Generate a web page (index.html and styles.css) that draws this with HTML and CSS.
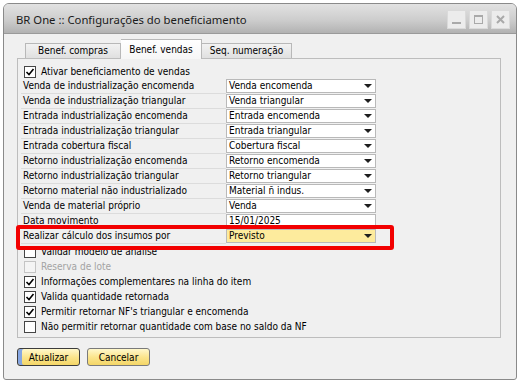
FILE: index.html
```html
<!DOCTYPE html>
<html lang="pt-BR">
<head>
    <meta charset="UTF-8">
    <title>BR One :: Configurações do beneficiamento</title>
    <link rel="stylesheet" href="styles.css">
</head>
<body>
    <div class="window">
        <div class="titlebar">
            <span class="title">BR One :: Configurações do beneficiamento</span>
            <div class="controls">
                <span class="ctl"><svg width="11" height="11" viewBox="0 0 11 11"><rect x="1" y="8" width="9" height="2" fill="#a9a9a9"/></svg></span>
                <span class="ctl"><svg width="11" height="11" viewBox="0 0 11 11"><rect x="1.5" y="1.5" width="8" height="8" fill="none" stroke="#a9a9a9" stroke-width="1"/><rect x="1" y="1" width="9" height="2" fill="#a9a9a9"/></svg></span>
                <span class="ctl"><svg width="11" height="11" viewBox="0 0 11 11"><path d="M2 2 L9 9 M9 2 L2 9" stroke="#a9a9a9" stroke-width="2"/></svg></span>
            </div>
        </div>

        <div class="content">
            <div class="tabs">
                <div class="tab tab-1">Benef. compras</div>
                <div class="tab tab-2 active">Benef. vendas</div>
                <div class="tab tab-3">Seq. numeração</div>
            </div>

            <div class="panel">
                <div class="check-row">
                    <span class="box"><svg width="10" height="10" viewBox="0 0 10 10"><path d="M1.5 5 L4 7.5 L8.5 2" fill="none" stroke="#000" stroke-width="1.6"/></svg></span>
                    Ativar beneficiamento de vendas
                </div>

                <div class="field-row"><span class="label">Venda de industrialização encomenda</span><span class="combo">Venda encomenda</span></div>
                <div class="field-row"><span class="label">Venda de industrialização triangular</span><span class="combo">Venda triangular</span></div>
                <div class="field-row"><span class="label">Entrada industrialização encomenda</span><span class="combo">Entrada encomenda</span></div>
                <div class="field-row"><span class="label">Entrada industrialização triangular</span><span class="combo">Entrada triangular</span></div>
                <div class="field-row"><span class="label">Entrada cobertura fiscal</span><span class="combo">Cobertura fiscal</span></div>
                <div class="field-row"><span class="label">Retorno industrialização encomenda</span><span class="combo">Retorno encomenda</span></div>
                <div class="field-row"><span class="label">Retorno industrialização triangular</span><span class="combo">Retorno triangular</span></div>
                <div class="field-row"><span class="label">Retorno material não industrializado</span><span class="combo">Material ñ indus.</span></div>
                <div class="field-row"><span class="label">Venda de material próprio</span><span class="combo">Venda</span></div>
                <div class="field-row"><span class="label">Data movimento</span><span class="edit">15/01/2025</span></div>
                <div class="field-row"><span class="label">Realizar cálculo dos insumos por</span><span class="combo selected">Previsto</span></div>

                <div class="check-row">
                    <span class="box"></span>
                    Validar modelo de análise
                </div>
                <div class="check-row disabled">
                    <span class="box"></span>
                    Reserva de lote
                </div>
                <div class="check-row">
                    <span class="box"><svg width="10" height="10" viewBox="0 0 10 10"><path d="M1.5 5 L4 7.5 L8.5 2" fill="none" stroke="#000" stroke-width="1.6"/></svg></span>
                    Informações complementares na linha do item
                </div>
                <div class="check-row">
                    <span class="box"><svg width="10" height="10" viewBox="0 0 10 10"><path d="M1.5 5 L4 7.5 L8.5 2" fill="none" stroke="#000" stroke-width="1.6"/></svg></span>
                    Valida quantidade retornada
                </div>
                <div class="check-row">
                    <span class="box"><svg width="10" height="10" viewBox="0 0 10 10"><path d="M1.5 5 L4 7.5 L8.5 2" fill="none" stroke="#000" stroke-width="1.6"/></svg></span>
                    Permitir retornar NF's triangular e encomenda
                </div>
                <div class="check-row">
                    <span class="box"></span>
                    Não permitir retornar quantidade com base no saldo da NF
                </div>

                <!-- marcação em vermelho sobre a linha -->
                <div class="highlight"></div>
            </div>

            <div class="actions">
                <button class="btn default">Atualizar</button>
                <button class="btn">Cancelar</button>
            </div>
        </div>
    </div>
</body>
</html>
```

FILE: styles.css
```css
* {
    margin: 0;
    padding: 0;
    box-sizing: border-box;
}

body {
    background: #fff;
    font-family: "DejaVu Sans Condensed", "Liberation Sans", sans-serif;
    font-size: 10px;
    color: #000;
}

.window {
    margin: 3px 0 0 3px;
    width: 514px;
    height: 377px;
    border: 1px solid #8a8a8a;
    border-radius: 6px 6px 3px 3px;
    background: #f0f0f0;
    overflow: hidden;
}

.titlebar {
    height: 30px;
    display: flex;
    align-items: center;
    justify-content: space-between;
    padding: 0 6px 0 12px;
    background: linear-gradient(#e2e2e2, #cdcdcd 55%, #b2b2b2);
    border-bottom: 1px solid #9a9a9a;
}

.title {
    font-family: "Noto Sans", "Open Sans", sans-serif;
    font-size: 11.3px;
    color: #1a1a1a;
    padding-top: 2px;
}

.controls {
    display: flex;
    gap: 3px;
    margin-top: 2px;
}

.ctl {
    width: 19px;
    height: 19px;
    display: flex;
    align-items: center;
    justify-content: center;
    background: #ececec;
    border: 1px solid #dadada;
}

.content {
    padding: 5px 15px 0 13px;
}

.tabs {
    display: flex;
    align-items: flex-end;
    height: 19px;
    padding-left: 8px;
    position: relative;
    z-index: 2;
}

.tab {
    height: 15px;
    line-height: 14px;
    text-align: center;
    border: 1px solid #b8b8b8;
    border-bottom: none;
    background: linear-gradient(#f2f2f2, #e0e0e0);
}

.tab-1 { width: 96px; }
.tab-2 { width: 81px; }
.tab-3 { width: 90px; border-left: none; }

.tab.active {
    height: 20px;
    line-height: 19px;
    margin-bottom: -1px;
    background: linear-gradient(#ffffff, #f6f6f6);
    border-left: none;
}

.panel {
    position: relative;
    width: 484px;
    border: 1px solid #bdbdbd;
    padding: 5px 0 3px 3px;
}

.check-row {
    height: 15px;
    display: flex;
    align-items: center;
    padding-left: 3px;
}

.box {
    width: 12px;
    height: 12px;
    margin-right: 5px;
    border: 1px solid #454545;
    background: #fff;
    display: flex;
    align-items: center;
    justify-content: center;
}

.check-row.disabled {
    color: #a3a3a3;
}

.check-row.disabled .box {
    border-color: #c4c4c4;
    background: #f4f4f4;
}

.field-row {
    height: 15px;
    display: flex;
}

.label {
    width: 205px;
    padding-left: 2px;
    line-height: 14px;
    border-bottom: 1px solid #dcdcdc;
    white-space: nowrap;
}

.combo,
.edit {
    position: relative;
    width: 150px;
    height: 14px;
    line-height: 12px;
    padding-left: 2px;
    background: #fff;
    border: 1px solid #b9b9b9;
}

.combo::after {
    content: "";
    position: absolute;
    right: 3px;
    top: 4px;
    border-left: 4px solid transparent;
    border-right: 4px solid transparent;
    border-top: 4px solid #1e1e1e;
}

.combo.selected {
    background: #fdeb9d;
}

.highlight {
    position: absolute;
    left: -2px;
    top: 166px;
    width: 378px;
    height: 25px;
    border: 4px solid #f20000;
    border-radius: 3px;
}

.actions {
    display: flex;
    gap: 7px;
    margin-top: 10px;
    margin-left: 0;
}

.btn {
    width: 63px;
    height: 18px;
    font-family: "DejaVu Sans Condensed", "Liberation Sans", sans-serif;
    font-size: 10px;
    color: #000;
    border: 1px solid #7a7a7a;
    border-radius: 3px;
    background: linear-gradient(#fff8cc, #fbe58e 50%, #f4d667);
}

.btn.default {
    border-color: #3c3c3c;
    box-shadow: inset 4px 0 0 #86a6e2;
}
```
